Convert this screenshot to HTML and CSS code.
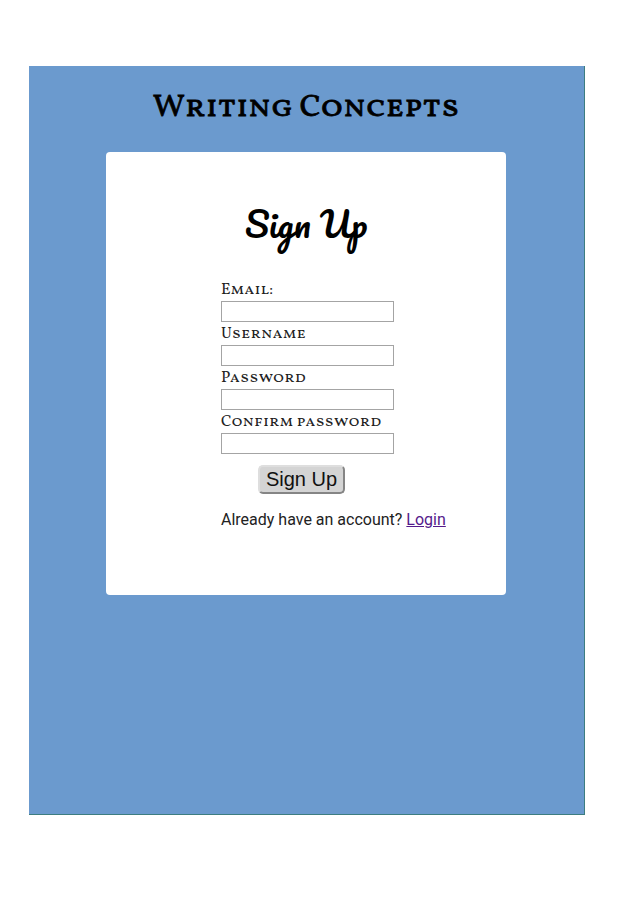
FILE: index.html
```html
<!DOCTYPE html>
<html lang="en">
<head>
<meta charset="utf-8">
<title>Writing Concepts</title>
<link rel="stylesheet" href="styles.css">
</head>
<body>
<main class="page">
<h1 class="brand">Writing Concepts</h1>
<section class="card">
<h2 class="title">Sign Up</h2>
<form class="form">
<label for="email">Email:</label>
<input id="email" type="email">
<label for="user">Username</label>
<input id="user" type="text">
<label for="pass">Password</label>
<input id="pass" type="password">
<label for="confirm">Confirm password</label>
<input id="confirm" type="password">
<button type="button">Sign Up</button>
<p class="login">Already have an account? <a href="#">Login</a></p>
</form>
</section>
</main>
</body>
</html>
```
FILE: styles.css
```css
* { box-sizing: border-box; }
body { margin: 0; padding: 66px 0 0 29px; background: #fff; color: #000; }
.page {
  width: 556px;
  height: 749px;
  background: #6b9ace;
  border-right: 1px solid #3d7d80;
  border-bottom: 1px solid #3d7d80;
  padding-left: 77px;
}
.brand {
  margin: 0;
  height: 86px;
  width: 400px;
  text-align: center;
  font: 400 32px/84px "Vollkorn SC", "Liberation Serif", serif;
  -webkit-text-stroke: 0.8px #000;
  white-space: nowrap;
}
.card {
  width: 400px;
  height: 443px;
  background: #fff;
  border-radius: 4px;
}
.title {
  margin: 0;
  height: 127px;
  text-align: center;
  font: 400 35px/142px Pacifico, Lato, cursive;
}
.form { width: 230px; margin-left: 115px; }
label {
  display: block;
  height: 22px;
  font: 16px/23px "Vollkorn SC", "Liberation Serif", serif;
  color: #222;
  white-space: nowrap;
}
input {
  display: block;
  width: 173px;
  height: 21px;
  margin: 0 0 1px;
  border: 1px solid #a4a4a4;
  background: #fff;
  outline: 0;
}
button {
  display: block;
  width: 87px;
  height: 29px;
  margin: 11px 0 0 37px;
  padding: 0 0 1px;
  background: #d4d4d4;
  border: 2px solid;
  border-color: #dedede #858585 #858585 #dedede;
  border-radius: 5px;
  font: 20px/24px "Liberation Sans", sans-serif;
  color: #111;
}
.login {
  margin: 16px 0 0;
  font: 16px/20px Roboto, sans-serif;
  color: #222;
  white-space: nowrap;
}
.login a { color: #551a8b; }
```
